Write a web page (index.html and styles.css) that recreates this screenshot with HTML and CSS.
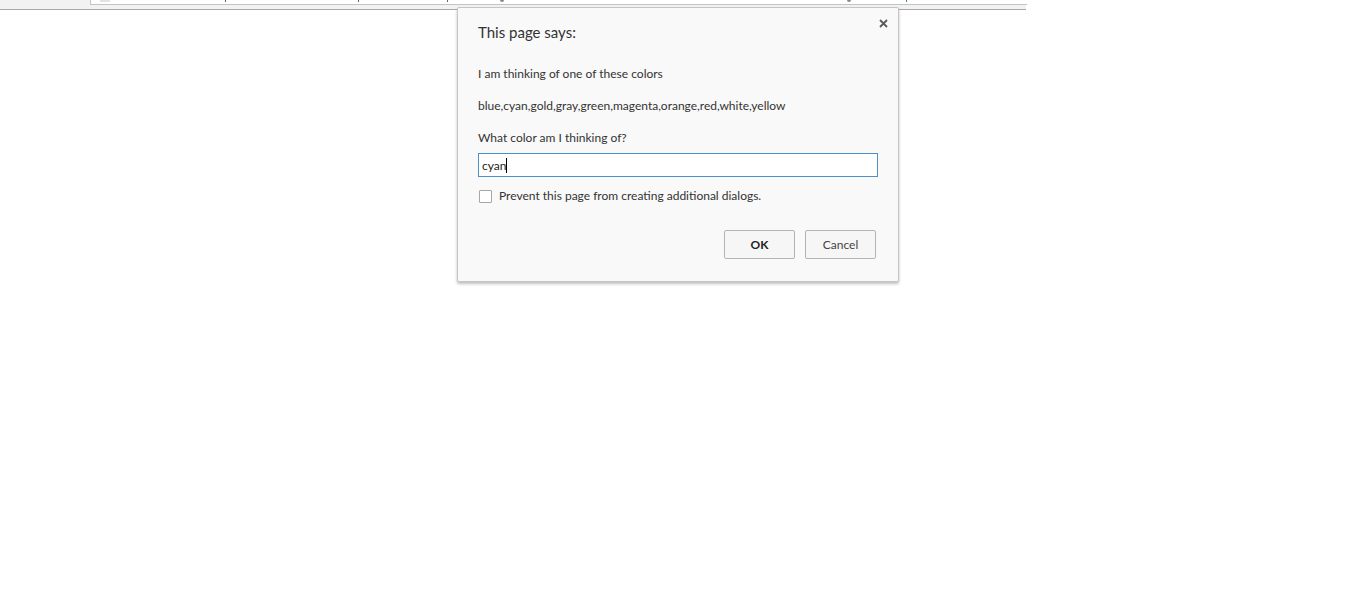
FILE: index.html
```html
<!DOCTYPE html>
<html>
<head>
<meta charset="utf-8">
<link rel="stylesheet" href="styles.css">
</head>
<body>
<div class="toolbar">
  <div class="omnibox">
    <span class="mark icon" style="left:9px"></span>
    <span class="mark" style="left:134px;background:#3a7a3a"></span>
    <span class="mark" style="left:267px"></span>
    <span class="mark" style="left:356px"></span>
    <span class="mark g" style="left:409px"></span>
    <span class="mark g" style="left:756px"></span>
    <span class="mark" style="left:815px;background:#3a9a4a"></span>
  </div>
</div>
<div class="dialog">
  <button class="close" aria-label="Close">
    <svg width="9" height="9" viewBox="0 0 9 9"><path d="M1 1L8 8M8 1L1 8" stroke="#5a5a5a" stroke-width="1.8"/></svg>
  </button>
  <h1 class="title">This page says:</h1>
  <p class="msg first">I am thinking of one of these colors</p>
  <p class="msg">blue,cyan,gold,gray,green,magenta,orange,red,white,yellow</p>
  <p class="msg">What color am I thinking of?</p>
  <div class="input"><span>cyan</span><span class="caret"></span></div>
  <label class="check"><span class="box"></span><span>Prevent this page from creating additional dialogs.</span></label>
  <div class="buttons">
    <button class="btn ok">OK</button>
    <button class="btn">Cancel</button>
  </div>
</div>
</body>
</html>
```
FILE: styles.css
```css
html, body {
  margin: 0;
  padding: 0;
  background: #fff;
  font-family: Lato, "Noto Sans", "Liberation Sans", sans-serif;
  color: #333;
}
.toolbar {
  width: 1026px;
  height: 9px;
  background: #f2f2f2;
  border-bottom: 1px solid #a8a8a8;
  box-sizing: content-box;
  position: relative;
}
.omnibox {
  position: absolute;
  left: 90px;
  top: 0;
  width: 936px;
  height: 4px;
  background: #fff;
  border: 1px solid #c4c4c4;
  border-top: none;
  border-right: none;
}
.mark {
  position: absolute;
  top: 0;
  width: 1px;
  height: 2px;
  background: #666;
}
.mark.icon {
  width: 10px;
  height: 2px;
  background: #e2e2e2;
}
.mark.g {
  width: 4px;
  height: 2px;
  border-radius: 0 0 2px 2px;
  background: #888;
}
.dialog {
  position: absolute;
  left: 457px;
  top: 7px;
  width: 400px;
  padding: 0 20px 22px 20px;
  background: #f9f9f9;
  border: 1px solid #c6c6c6;
  border-radius: 2px;
  box-shadow: 0 2px 3px rgba(0,0,0,0.25);
}
.close {
  position: absolute;
  right: 10px;
  top: 11px;
  width: 9px;
  height: 9px;
  padding: 0;
  border: 0;
  background: none;
  display: flex;
}
.title {
  margin: 14px 0 0 0;
  font-size: 15px;
  font-weight: normal;
  line-height: 20px;
  color: #333;
}
.msg {
  margin: 12px 0 0 0;
  font-size: 12px;
  line-height: 20px;
}
.msg.first {
  margin-top: 22px;
}
.input {
  margin-top: 5px;
  height: 22px;
  border: 1px solid #4d90c9;
  background: #fff;
  display: flex;
  align-items: center;
  padding-left: 3px;
  font-size: 12px;
  color: #222;
}
.caret {
  width: 1px;
  height: 15px;
  background: #000;
}
.check {
  display: flex;
  align-items: center;
  gap: 7px;
  margin-top: 11px;
  margin-left: 1px;
  font-size: 12px;
  line-height: 16px;
}
.box {
  width: 11px;
  height: 11px;
  border: 1px solid #a6a6a6;
  background: #fff;
  border-radius: 1px;
}
.buttons {
  display: flex;
  justify-content: flex-end;
  gap: 10px;
  margin-top: 26px;
  padding-right: 2px;
}
.btn {
  width: 71px;
  height: 29px;
  border: 1px solid #b4b4b4;
  border-radius: 2px;
  background: #f6f6f6;
  font-family: Lato, "Noto Sans", sans-serif;
  font-size: 12px;
  color: #444;
  padding: 0;
}
.btn.ok {
  font-weight: bold;
  color: #222;
}
```
